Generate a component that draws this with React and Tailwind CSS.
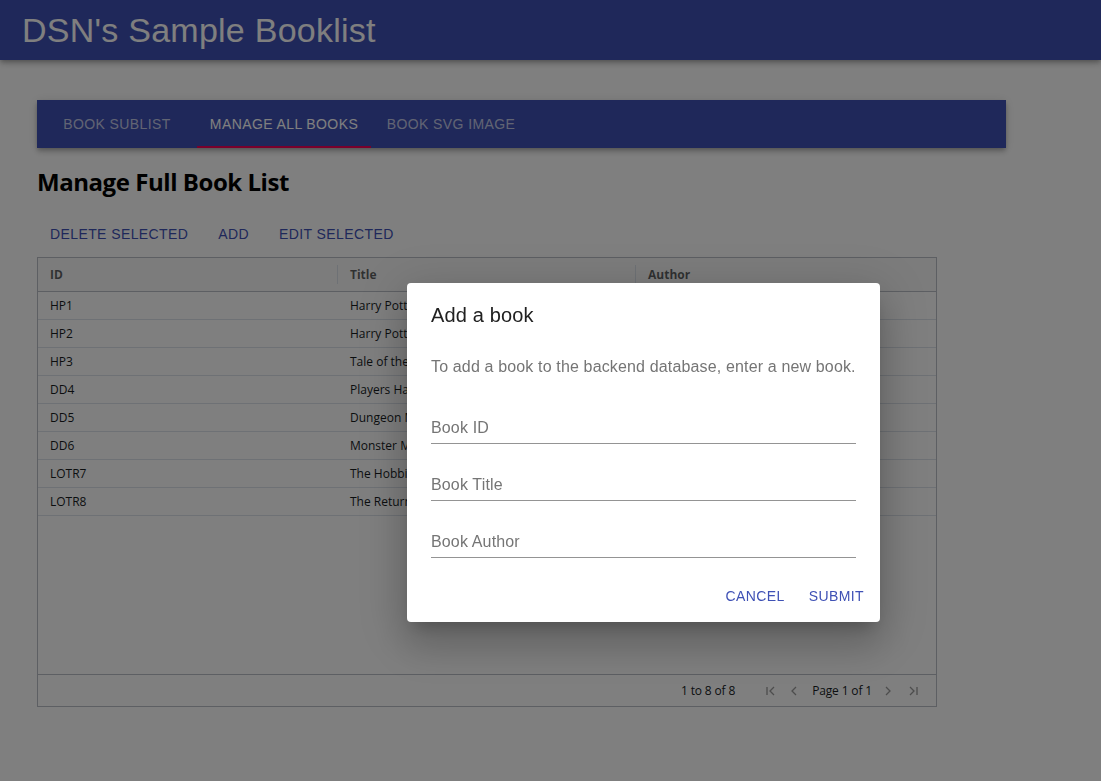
import React from 'react';

const books = [
  { id: 'HP1', title: "Harry Potter and the Sorcerer's Stone", author: 'J.K. Rowling' },
  { id: 'HP2', title: 'Harry Potter and the Chamber of Secrets', author: 'J.K. Rowling' },
  { id: 'HP3', title: 'Tale of the Prisoner of Azkaban', author: 'J.K. Rowling' },
  { id: 'DD4', title: 'Players Handbook', author: 'Wizards of the Coast' },
  { id: 'DD5', title: 'Dungeon Masters Guide', author: 'Wizards of the Coast' },
  { id: 'DD6', title: 'Monster Manual', author: 'Wizards of the Coast' },
  { id: 'LOTR7', title: 'The Hobbit', author: 'J.R.R. Tolkien' },
  { id: 'LOTR8', title: 'The Return of the King', author: 'J.R.R. Tolkien' },
];

function PageIcon({ d }) {
  return (
    <svg width="14" height="14" viewBox="0 0 14 14" fill="none" stroke="#9a9a9a" strokeWidth="1.3">
      <path d={d} />
    </svg>
  );
}

function TextField({ label }) {
  return (
    <div className="flex flex-col pt-4">
      <div className="text-[16px] text-[#757575] leading-[19px] pb-[6px] pt-[4px] tracking-[0.15px]">{label}</div>
      <div className="h-px bg-[#949494]"></div>
    </div>
  );
}

export default function App() {
  return (
    <div className="relative min-h-screen bg-white font-['Liberation_Sans',Arial,sans-serif]">
      {/* app bar */}
      <header className="h-[60px] bg-[#3f51b5] flex items-center pl-[22px] shadow-[0_2px_4px_-1px_rgba(0,0,0,0.2),0_4px_5px_0_rgba(0,0,0,0.14),0_1px_10px_0_rgba(0,0,0,0.12)]">
        <h1 className="text-[34px] text-white leading-none tracking-[0.25px]">DSN's Sample Booklist</h1>
      </header>

      <main className="pl-[37px] pt-[40px]">
        {/* tabs */}
        <div className="w-[969px] h-[48px] bg-[#3f51b5] flex shadow-[0_2px_4px_-1px_rgba(0,0,0,0.2),0_4px_5px_0_rgba(0,0,0,0.14),0_1px_10px_0_rgba(0,0,0,0.12)]">
          <div className="w-[160px] flex items-center justify-center text-[14px] tracking-[0.4px] text-white/70">BOOK SUBLIST</div>
          <div className="relative w-[174px] flex items-center justify-center text-[14px] tracking-[0.4px] text-white">
            MANAGE ALL BOOKS
            <div className="absolute left-0 right-0 bottom-0 h-[2px] bg-[#f50057]"></div>
          </div>
          <div className="w-[160px] flex items-center justify-center text-[14px] tracking-[0.4px] text-white/70">BOOK SVG IMAGE</div>
        </div>

        <h2 className="mt-[18px] text-[24px] leading-[32px] font-bold text-black font-['Open_Sans',sans-serif] tracking-[-0.45px]">
          Manage Full Book List
        </h2>

        <div className="mt-[18px] pl-[5px] flex gap-[14px] h-[36px] items-center">
          <button className="px-[8px] h-[36px] text-[14px] tracking-[0.4px] text-[#3f51b5]">DELETE SELECTED</button>
          <button className="px-[8px] h-[36px] text-[14px] tracking-[0.4px] text-[#3f51b5]">ADD</button>
          <button className="px-[8px] h-[36px] text-[14px] tracking-[0.4px] text-[#3f51b5]">EDIT SELECTED</button>
        </div>

        {/* grid */}
        <div className="mt-[5px] w-[900px] h-[450px] border border-[#babfc7] flex flex-col font-['Open_Sans',sans-serif] text-[12px] text-[#181d1f]">
          <div className="h-[34px] bg-[#f8f8f8] border-b border-[#babfc7] flex items-center font-bold text-[#181d1f]/70">
            <div className="w-[300px] pl-[12px] relative h-full flex items-center">
              ID
              <div className="absolute right-0 top-[7px] bottom-[7px] w-px bg-[#dde2eb]"></div>
            </div>
            <div className="w-[298px] pl-[12px] relative h-full flex items-center">
              Title
              <div className="absolute right-0 top-[7px] bottom-[7px] w-px bg-[#dde2eb]"></div>
            </div>
            <div className="flex-1 pl-[12px] h-full flex items-center">Author</div>
          </div>
          <div className="flex-1">
            {books.map((b) => (
              <div key={b.id} className="h-[28px] border-b border-[#dde2eb] flex items-center">
                <div className="w-[300px] pl-[12px]">{b.id}</div>
                <div className="w-[298px] pl-[12px] truncate">{b.title}</div>
                <div className="flex-1 pl-[12px]">{b.author}</div>
              </div>
            ))}
          </div>
          <div className="h-[32px] border-t border-[#babfc7] flex items-center justify-end pr-[16px] text-[12px] text-[#181d1f] tracking-[-0.15px]">
            <span>1 to 8 of 8</span>
            <div className="ml-[29px] flex items-center">
              <PageIcon d="M3 3v8M10 3l-4 4 4 4" />
              <span className="ml-[9px]"><PageIcon d="M9 3l-4 4 4 4" /></span>
              <span className="ml-[11px]">Page 1 of 1</span>
              <span className="ml-[9px]"><PageIcon d="M5 3l4 4-4 4" /></span>
              <span className="ml-[11px]"><PageIcon d="M4 3l4 4-4 4M11 3v8" /></span>
            </div>
          </div>
        </div>
      </main>

      {/* modal backdrop */}
      <div className="fixed inset-0 bg-black/50"></div>

      {/* dialog */}
      <div className="absolute left-[407px] top-[283px] w-[473px] bg-white rounded-[4px] shadow-[0_11px_15px_-7px_rgba(0,0,0,0.2),0_24px_38px_3px_rgba(0,0,0,0.14),0_9px_46px_8px_rgba(0,0,0,0.12)]">
        <div className="px-[24px] pt-[20px] pb-[28px] text-[20px] leading-[24px] tracking-[0.15px] text-[#212121]">Add a book</div>
        <div className="px-[24px] pb-[14px]">
          <p className="text-[16px] leading-[24px] tracking-[0.15px] text-[#757575]">To add a book to the backend database, enter a new book.</p>
          <div className="mt-[19px] flex flex-col gap-[11px]">
            <TextField label="Book ID" />
            <TextField label="Book Title" />
            <TextField label="Book Author" />
          </div>
        </div>
        <div className="flex justify-end items-center gap-[8px] p-[8px] pt-[6px]">
          <button className="px-[8px] h-[36px] text-[14px] tracking-[0.4px] text-[#3f51b5]">CANCEL</button>
          <button className="px-[8px] h-[36px] text-[14px] tracking-[0.4px] text-[#3f51b5]">SUBMIT</button>
        </div>
      </div>
    </div>
  );
}
